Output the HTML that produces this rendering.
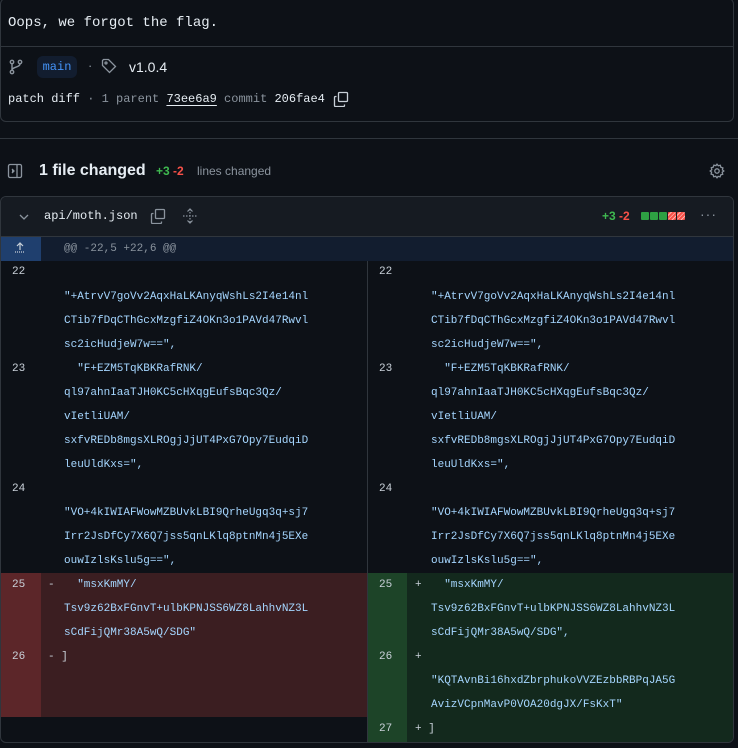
<!DOCTYPE html>
<html><head><meta charset="utf-8"><style>
*{margin:0;padding:0;box-sizing:border-box}
body{width:738px;height:748px;background:#0d1117;color:#e6edf3;font-family:"Liberation Sans",sans-serif;position:relative;overflow:hidden}
.mono{font-family:"Liberation Mono",monospace}
.abs{position:absolute}
.box{position:absolute;border:1px solid #30363d;border-radius:6px}
.t{position:absolute;white-space:pre;font-family:"Liberation Mono",monospace;font-size:11px;line-height:24px}
.c{color:#a5d6ff}
.n{color:#c9d1d9}
</style></head><body>
<div class="box" style="left:0;top:-2px;width:734px;height:124px"></div>
<div class="abs" style="left:0;top:46px;width:734px;height:1px;background:#30363d"></div>
<div class="abs mono" style="left:8px;top:15px;font-size:14px;color:#e6edf3">Oops, we forgot the flag.</div>
<svg class="abs" style="left:9px;top:59px" width="14" height="16" viewBox="0 0 14 16" fill="none" stroke="#8b949e" stroke-width="1.4"><circle cx="3" cy="13" r="1.7"/><circle cx="3" cy="3" r="1.7"/><circle cx="11" cy="3" r="1.7"/><path d="M3 4.7V11.3M11 4.7c0 4-8 3-8 6.6"/></svg>
<div class="abs mono" style="left:37px;top:56px;width:40px;height:22px;background:#121d2f;border-radius:6px;color:#4493f8;font-size:12px;line-height:22px;text-align:center">main</div>
<div class="abs" style="left:88px;top:58px;color:#8b949e;font-size:13px">·</div>
<svg class="abs" style="left:101px;top:58px" width="16" height="16" viewBox="0 0 16 16" fill="none" stroke="#8b949e" stroke-width="1.3"><path d="M1.5 2.5v5l7 7 6-6-7-7h-5z"/><circle cx="5" cy="5" r="1"/></svg>
<div class="abs" style="left:129px;top:59px;font-size:14px;color:#e6edf3">v1.0.4</div>
<div class="abs mono" style="left:8px;top:92px;font-size:12px;white-space:pre"><span style="color:#e6edf3">patch diff</span><span style="color:#8b949e"> · 1 parent </span><span style="color:#e6edf3;text-decoration:underline;text-underline-offset:3px">73ee6a9</span><span style="color:#8b949e"> commit </span><span style="color:#e6edf3">206fae4</span></div>
<svg class="abs" style="left:333px;top:91px" width="16" height="16" viewBox="0 0 16 16" fill="none" stroke="#c9d1d9" stroke-width="1.3"><rect x="5.5" y="1.5" width="9" height="9" rx="1"/><path d="M3.5 5.5h-1a1 1 0 0 0-1 1v8a1 1 0 0 0 1 1h8a1 1 0 0 0 1-1v-1"/></svg>
<div class="abs" style="left:0;top:138px;width:738px;height:1px;background:#30363d"></div>
<svg class="abs" style="left:7px;top:163px" width="16" height="16" viewBox="0 0 16 16" fill="none" stroke="#8b949e" stroke-width="1.3"><rect x="1.5" y="1.5" width="13" height="13" rx="1.5"/><path d="M10 1.5v13"/><path d="M5 6l2 2-2 2" fill="#8b949e"/></svg>
<div class="abs" style="left:39px;top:162px;font-size:16px;font-weight:bold;color:#e6edf3">1 file changed</div>
<div class="abs" style="left:156px;top:164px;font-size:12px;font-weight:bold"><span style="color:#3fb950">+3</span> <span style="color:#f85149">-2</span></div>
<div class="abs" style="left:197px;top:164px;font-size:12px;color:#8b949e">lines changed</div>
<svg class="abs" style="left:709px;top:163px" width="16" height="16" viewBox="0 0 16 16" fill="none" stroke="#8b949e" stroke-width="1.3"><circle cx="8" cy="8" r="2.2"/><path d="M8 1.2l1.3 1.6 2-.5.6 2 2 .6-.5 2L14.8 8l-1.6 1.3.5 2-2 .6-.6 2-2-.5L8 14.8l-1.3-1.6-2 .5-.6-2-2-.6.5-2L1.2 8l1.6-1.3-.5-2 2-.6.6-2 2 .5z"/></svg>

<div class="box" style="left:0;top:196px;width:734px;height:547px;overflow:hidden">
 <div class="abs" style="left:0;top:0;width:734px;height:40px;background:#161b22;border-bottom:1px solid #30363d"></div>
 <div class="abs" style="left:0;top:40px;width:734px;height:24px;background:#121d2f"></div>
 <div class="abs" style="left:0;top:40px;width:40px;height:24px;background:#1f3f6e"></div>
 <div class="abs" style="left:0;top:376px;width:366px;height:144px;background:#3b1e21"></div>
 <div class="abs" style="left:0;top:376px;width:40px;height:144px;background:#5c2629"></div>
 <div class="abs" style="left:366px;top:376px;width:368px;height:171px;background:#13291d"></div>
 <div class="abs" style="left:366px;top:376px;width:40px;height:171px;background:#1d4428"></div>
 <div class="abs" style="left:366px;top:64px;width:1px;height:483px;background:#30363d"></div>
</div>
<svg class="abs" style="left:18px;top:211px" width="12" height="12" viewBox="0 0 12 12" fill="none" stroke="#8b949e" stroke-width="1.3"><path d="M2 4l4 4 4-4"/></svg>
<div class="abs mono" style="left:44px;top:209px;font-size:12px;color:#e6edf3">api/moth.json</div>
<svg class="abs" style="left:150px;top:208px" width="16" height="16" viewBox="0 0 16 16" fill="none" stroke="#8b949e" stroke-width="1.3"><rect x="5.5" y="1.5" width="9" height="9" rx="1"/><path d="M3.5 5.5h-1a1 1 0 0 0-1 1v8a1 1 0 0 0 1 1h8a1 1 0 0 0 1-1v-1"/></svg>
<svg class="abs" style="left:182px;top:208px" width="16" height="16" viewBox="0 0 16 16" fill="none" stroke="#8b949e" stroke-width="1.2" stroke-dasharray="1.5 1.5"><path d="M8 1v14M1 8h14"/><path d="M5.5 3.5L8 1l2.5 2.5M5.5 12.5L8 15l2.5-2.5" stroke-dasharray="none"/></svg>
<div class="abs" style="left:602px;top:209px;font-size:12px;font-weight:bold"><span style="color:#3fb950">+3</span> <span style="color:#f85149">-2</span></div>
<div class="abs" style="left:641px;top:212px;display:flex;gap:1px">
<div style="width:8px;height:8px;background:#2ea043;border-radius:1px"></div><div style="width:8px;height:8px;background:#2ea043;border-radius:1px"></div><div style="width:8px;height:8px;background:#2ea043;border-radius:1px"></div><div style="width:8px;height:8px;background:repeating-linear-gradient(135deg,#f85149 0 2px,#ffb3ae 2px 3px);border-radius:1px"></div><div style="width:8px;height:8px;background:repeating-linear-gradient(135deg,#f85149 0 2px,#ffb3ae 2px 3px);border-radius:1px"></div></div>
<div class="abs" style="left:700px;top:206px;color:#8b949e;font-size:14px;letter-spacing:1px">···</div>
<svg class="abs" style="left:14px;top:240px" width="12" height="14" viewBox="0 0 12 14" fill="none" stroke="#c9d1d9" stroke-width="1.2"><path d="M6 10V3M3 6l3-3 3 3"/><path d="M1 12h10" stroke-dasharray="1 1"/></svg>
<div class="t" style="left:64px;top:237px;color:#8b949e">@@ -22,5 +22,6 @@</div>

<div class="t n" style="left:12px;top:260px">22</div>
<div class="t c" style="left:64px;top:285px">"+AtrvV7goVv2AqxHaLKAnyqWshLs2I4e14nl
CTib7fDqCThGcxMzgfiZ4OKn3o1PAVd47Rwvl
sc2icHudjeW7w==",</div>
<div class="t n" style="left:12px;top:357px">23</div>
<div class="t c" style="left:64px;top:357px">  "F+EZM5TqKBKRafRNK/
ql97ahnIaaTJH0KC5cHXqgEufsBqc3Qz/
vIetliUAM/
sxfvREDb8mgsXLROgjJjUT4PxG7Opy7EudqiD
leuUldKxs=",</div>
<div class="t n" style="left:12px;top:477px">24</div>
<div class="t c" style="left:64px;top:501px">"VO+4kIWIAFWowMZBUvkLBI9QrheUgq3q+sj7
Irr2JsDfCy7X6Q7jss5qnLKlq8ptnMn4j5EXe
ouwIzlsKslu5g==",</div>
<div class="t n" style="left:12px;top:573px">25</div>
<div class="t n" style="left:48px;top:573px">-</div>
<div class="t c" style="left:64px;top:573px">  "msxKmMY/
Tsv9z62BxFGnvT+ulbKPNJSS6WZ8LahhvNZ3L
sCdFijQMr38A5wQ/SDG"</div>
<div class="t n" style="left:12px;top:645px">26</div>
<div class="t n" style="left:48px;top:645px">- ]</div>

<div class="t n" style="left:379px;top:260px">22</div>
<div class="t c" style="left:431px;top:285px">"+AtrvV7goVv2AqxHaLKAnyqWshLs2I4e14nl
CTib7fDqCThGcxMzgfiZ4OKn3o1PAVd47Rwvl
sc2icHudjeW7w==",</div>
<div class="t n" style="left:379px;top:357px">23</div>
<div class="t c" style="left:431px;top:357px">  "F+EZM5TqKBKRafRNK/
ql97ahnIaaTJH0KC5cHXqgEufsBqc3Qz/
vIetliUAM/
sxfvREDb8mgsXLROgjJjUT4PxG7Opy7EudqiD
leuUldKxs=",</div>
<div class="t n" style="left:379px;top:477px">24</div>
<div class="t c" style="left:431px;top:501px">"VO+4kIWIAFWowMZBUvkLBI9QrheUgq3q+sj7
Irr2JsDfCy7X6Q7jss5qnLKlq8ptnMn4j5EXe
ouwIzlsKslu5g==",</div>
<div class="t n" style="left:379px;top:573px">25</div>
<div class="t n" style="left:415px;top:573px">+</div>
<div class="t c" style="left:431px;top:573px">  "msxKmMY/
Tsv9z62BxFGnvT+ulbKPNJSS6WZ8LahhvNZ3L
sCdFijQMr38A5wQ/SDG",</div>
<div class="t n" style="left:379px;top:645px">26</div>
<div class="t n" style="left:415px;top:645px">+</div>
<div class="t c" style="left:431px;top:669px">"KQTAvnBi16hxdZbrphukoVVZEzbbRBPqJA5G
AvizVCpnMavP0VOA20dgJX/FsKxT"</div>
<div class="t n" style="left:379px;top:717px">27</div>
<div class="t n" style="left:415px;top:717px">+ ]</div>
</body></html>
